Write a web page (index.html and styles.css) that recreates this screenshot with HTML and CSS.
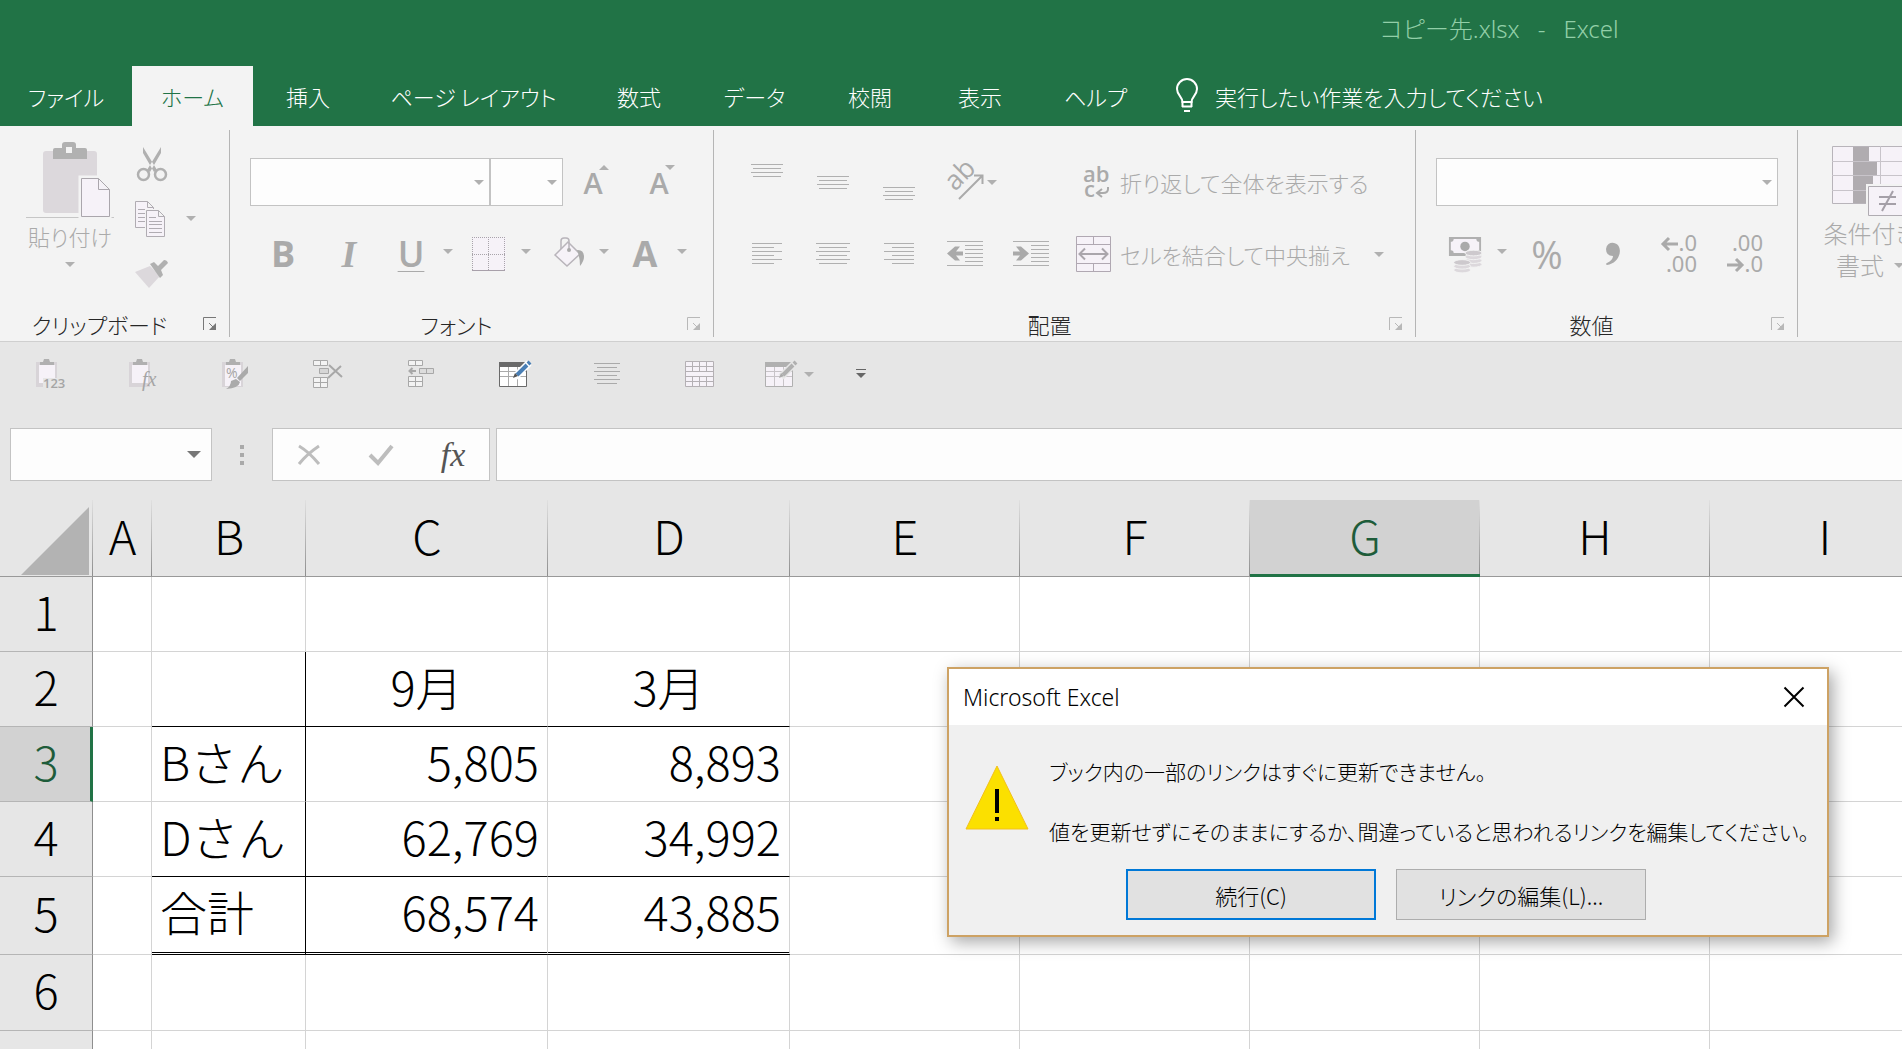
FILE: index.html
```html
<!DOCTYPE html>
<html lang="ja">
<head>
<meta charset="utf-8">
<title>コピー先.xlsx - Excel</title>
<link rel="stylesheet" href="styles.css">
</head>
<body>
<svg class="defs" aria-hidden="true">
  <symbol id="arrow" viewBox="0 0 10 5"><path d="M0 0h10L5 5z" fill="currentColor"/></symbol>
  <symbol id="launch" viewBox="0 0 14 14"><path d="M.5 13V.5H13M6 6l5 5" fill="none" stroke="currentColor"/><path d="M13 6v7H6z" fill="currentColor"/></symbol>
</svg>

<header class="titlebar"><span>コピー先.xlsx</span><span>-</span><span>Excel</span></header>

<nav class="tabs">
  <button class="tab tab-file">ファイル</button>
  <button class="tab tab-m active">ホーム</button>
  <button class="tab">挿入</button>
  <button class="tab tab-l">ページ レイアウト</button>
  <button class="tab">数式</button>
  <button class="tab tab-m">データ</button>
  <button class="tab">校閲</button>
  <button class="tab">表示</button>
  <button class="tab tab-m">ヘルプ</button>
  <button class="tellme">
    <svg width="24" height="34" viewBox="0 0 24 34" fill="none" stroke="#fff" stroke-width="2"><path d="M7.500 23c0-5-5.500-7-5.500-13a9.500 9.500 0 0 1 20 0c0 6-5.500 8-5.500 13z"/><path d="M7 27.500h10M9 32h6"/><path d="M7.500 22v6M16.500 22v6"/></svg>
    実行したい作業を入力してください
  </button>
</nav>

<main>
<section class="ribbon">
  <div class="group g-clip">
    <div class="clip-body">
      <button class="paste">
        <svg width="88" height="77" viewBox="0 0 88 77"><rect x="17" y="10" width="54" height="62" rx="3" fill="#dcd8dc"/><path d="M27 18V9q0-2 2-2h7V4q0-3 3-3h8q3 0 3 3v3h9q2 0 2 2v9z" fill="#b1b1b1"/><rect x="40" y="6" width="6" height="6" fill="#f3f3f3"/><path d="M0 76.500h88" stroke="#c6c6c6"/><path d="M54.500 36.500h19l10 11v28h-29z" fill="#f5f2f7" stroke="#f3f3f3" stroke-width="4"/><path d="M55.500 37.500h17l11 11v27h-28zM72.500 37.500v11h11" fill="#f6f2f8" stroke="#aaa6ac"/></svg>
        <span>貼り付け</span>
        <svg class="arr"><use href="#arrow"/></svg>
      </button>
      <div class="clip-tools">
        <button class="tool" aria-label="切り取り"><svg width="34" height="36" viewBox="-2 0 34 36"><path d="M7 1l14 23-3 2L7 7zM25 1L11 24l3 2L25 7z" fill="#b0b0b0"/><g fill="none" stroke="#b0b0b0" stroke-width="2.500"><circle cx="7.500" cy="28.500" r="5.500"/><circle cx="24.500" cy="28.500" r="5.500"/></g></svg></button>
        <button class="tool" aria-label="コピー"><svg width="34" height="36" viewBox="0 0 34 36" fill="#f6f2f8" stroke="#b0acb2"><path d="M1.500 26.500V.5h12l6 6v20zM13.500.5v6h6"/><path d="M4 8.500h7M4 12.500h7M4 16.500h7M4 20.500h7"/><path d="M12.500 35.500v-26h12l6 6v20zM24.500 9.500v6h6" stroke="#f3f3f3" stroke-width="3"/><path d="M12.500 35.500v-26h12l6 6v20zM24.500 9.500v6h6"/><path d="M15 16.500h7M15 20.500h13M15 23.500h13M15 27.500h13M15 31.500h13"/></svg><svg class="arr"><use href="#arrow"/></svg></button>
        <button class="tool" aria-label="書式のコピー/貼り付け"><svg width="34" height="30" viewBox="0 0 34 30"><path d="M1 13l15-6 10 10-11 12z" fill="#dcd8dc"/><path d="M16 5l4-2 4 4 6-6q3 0 4 3l-7 7 2 5-3 3z" fill="#b0b0b0"/></svg></button>
      </div>
    </div>
    <footer class="foot"><span>クリップボード</span><svg class="launch dark"><use href="#launch"/></svg></footer>
  </div>

  <div class="group g-font">
    <div class="row">
      <div class="combo c-font"><select aria-label="フォント"></select><svg class="arr"><use href="#arrow"/></svg></div>
      <div class="combo c-size"><select aria-label="フォント サイズ"></select><svg class="arr"><use href="#arrow"/></svg></div>
      <button class="ib up" aria-label="拡大"><b>A</b><svg class="arr flip"><use href="#arrow"/></svg></button>
      <button class="ib up" aria-label="縮小"><b>A</b><svg class="arr"><use href="#arrow"/></svg></button>
    </div>
    <div class="row">
      <button class="ib letter">B</button>
      <button class="ib letter italic">I</button>
      <button class="split"><span class="letter under">U</span><svg class="arr"><use href="#arrow"/></svg></button>
      <button class="split" aria-label="罫線"><svg width="34" height="34" viewBox="0 0 34 34"><rect width="34" height="34" fill="#f6f2f8"/><path d="M0 .5h33M0 17.500h33M.5 0v33M16.500 0v33M32.500 0v33" stroke="#a8a4aa" stroke-dasharray="1 1"/><path d="M0 33.500h33" stroke="#a8a0aa"/></svg><svg class="arr"><use href="#arrow"/></svg></button>
      <button class="split" aria-label="塗りつぶしの色"><svg width="34" height="34" viewBox="-3 0 34 34"><path d="M2 18L15 5l12 12-13 12z" fill="#f6f2f8" stroke="#b8b4ba" stroke-width="1.500"/><path d="M8 12V4q0-3 3-3h2q3 0 3 3v8" fill="none" stroke="#b8b4ba" stroke-width="1.500"/><circle cx="16" cy="13" r="2" fill="#aaa"/><path d="M25 13q6 0 6 7 0 4-4 9 0-9-3-16z" fill="#aaa"/></svg><svg class="arr"><use href="#arrow"/></svg></button>
      <button class="split"><span class="letter">A</span><svg class="arr"><use href="#arrow"/></svg></button>
    </div>
    <footer class="foot"><span>フォント</span><svg class="launch"><use href="#launch"/></svg></footer>
  </div>

  <div class="group g-align">
    <div class="row">
      <button class="ib" aria-label="上揃え"><svg width="34" height="36" stroke="#b0b0b0"><path d="M1 .5h32M3 4.500h28M1 8.500h32M3 12.500h28"/></svg></button>
      <button class="ib" aria-label="上下中央揃え"><svg width="34" height="36" stroke="#b0b0b0"><path d="M1 12.500h32M3 16.500h28M1 20.500h32M3 24.500h28"/></svg></button>
      <button class="ib" aria-label="下揃え"><svg width="34" height="36" stroke="#b0b0b0"><path d="M1 23.500h32M3 27.500h28M1 31.500h32M3 35.500h28"/></svg></button>
      <button class="ib orient" aria-label="方向"><svg width="36" height="36" viewBox="0 0 36 36"><text class="ab" transform="translate(8 28) rotate(-45)">ab</text><path d="M12 35l23-23M27 11.500h8.500V20" fill="none" stroke="#aaa" stroke-width="2"/></svg><svg class="arr"><use href="#arrow"/></svg></button>
      <button class="wide wrap"><svg width="30" height="38" viewBox="0 0 30 38"><text class="abb" x="1" y="19">ab</text><text class="abb" x="2" y="34">c</text><path d="M26 24v2q0 4-5 4h-5M20 26l-5 4 5 4" fill="none" stroke="#aaa" stroke-width="2"/></svg><span>折り返して全体を表示する</span></button>
    </div>
    <div class="row">
      <button class="ib" aria-label="左揃え"><svg width="34" height="22" stroke="#b0b0b0"><path d="M2 .5h30M2 4.500h22M2 8.500h30M2 12.500h22M2 16.500h30M2 20.500h22"/></svg></button>
      <button class="ib" aria-label="中央揃え"><svg width="34" height="22" stroke="#b0b0b0"><path d="M0 .5h34M3 4.500h28M0 8.500h34M3 12.500h28M0 16.500h34M3 20.500h28"/></svg></button>
      <button class="ib" aria-label="右揃え"><svg width="34" height="22" stroke="#b0b0b0"><path d="M2 .5h30M10 4.500h22M2 8.500h30M10 12.500h22M2 16.500h30M10 20.500h22"/></svg></button>
      <button class="ib" aria-label="インデントを減らす"><svg width="36" height="26" viewBox="0 0 36 26"><path d="M0 .5h36M18 4.500h18M18 8.500h18M18 12.500h18M18 16.500h18M18 20.500h18M0 24.500h36" stroke="#b0b0b0"/><path d="M0 12.500l8-7h5l-4 5h7v4H9l4 5H8z" fill="#aaa"/></svg></button>
      <button class="ib" aria-label="インデントを増やす"><svg width="36" height="26" viewBox="0 0 36 26"><path d="M0 .5h36M18 4.500h18M18 8.500h18M18 12.500h18M18 16.500h18M18 20.500h18M0 24.500h36" stroke="#b0b0b0"/><path d="M16 12.500l-8-7H3l4 5H0v4h7l-4 5h5z" fill="#aaa"/></svg></button>
      <button class="wide merge"><svg width="36" height="36" viewBox="0 0 36 36" fill="none"><path d="M.5.5h34v35H.5zM.5 8.500h34M.5 27.500h34M17.500.5v8M17.500 27.500v8" fill="#f6f2f8" stroke="#b0a8b2"/><path d="M3 18h29M9 12.500L3.500 18 9 23.500M26 12.500l5.500 5.500-5.500 5.500" stroke="#aaa6ac" stroke-width="2"/></svg><span>セルを結合して中央揃え</span><svg class="arr"><use href="#arrow"/></svg></button>
    </div>
    <footer class="foot"><span>配置</span><svg class="launch"><use href="#launch"/></svg></footer>
  </div>

  <div class="group g-num">
    <div class="row">
      <div class="combo c-num"><select aria-label="数値の書式"></select><svg class="arr"><use href="#arrow"/></svg></div>
    </div>
    <div class="row">
      <button class="split" aria-label="通貨表示形式"><svg width="36" height="40" viewBox="0 0 36 40"><path d="M1 2h34v20H1z" fill="#b0b0b0"/><path d="M6 4h24q0 3 3 3v9q-3 0-3 3H6q0-3-3-3V7q3 0 3-3z" fill="#f6f2f8"/><circle cx="18" cy="12" r="5" fill="#aaa"/><g fill="#dcd8dc" stroke="#f3f3f3" stroke-width="1"><ellipse cx="27" cy="31" rx="9" ry="3"/><ellipse cx="27" cy="27" rx="9" ry="3"/><ellipse cx="27" cy="23" rx="9" ry="3"/><ellipse cx="27" cy="19" rx="9" ry="3" fill="#cdc9cd"/><ellipse cx="15" cy="37" rx="9" ry="3"/><ellipse cx="15" cy="33" rx="9" ry="3"/><ellipse cx="15" cy="29" rx="9" ry="3" fill="#cdc9cd"/></g></svg><svg class="arr"><use href="#arrow"/></svg></button>
      <button class="ib percent">%</button>
      <button class="ib" aria-label="桁区切りスタイル"><svg width="18" height="24" viewBox="0 0 18 24"><path d="M2 7a6.500 6.500 0 0 1 8-6c10 2 7 20-7 22q-2-1 0-2 6-3 6-7-7 0-7-7z" fill="#aaa"/></svg></button>
      <button class="ib" aria-label="小数点以下の表示桁数を増やす"><svg width="36" height="40" viewBox="0 0 36 40"><text class="dec" x="36" y="17" text-anchor="end">.0</text><text class="dec" x="36" y="38" text-anchor="end">.00</text><path d="M2 10h15M8 4l-6 6 6 6" fill="none" stroke="#aaa" stroke-width="3"/></svg></button>
      <button class="ib" aria-label="小数点以下の表示桁数を減らす"><svg width="36" height="40" viewBox="0 0 36 40"><text class="dec" x="36" y="17" text-anchor="end">.00</text><text class="dec" x="36" y="38" text-anchor="end">.0</text><path d="M0 31h15M9 25l6 6-6 6" fill="none" stroke="#aaa" stroke-width="3"/></svg></button>
    </div>
    <footer class="foot"><span>数値</span><svg class="launch"><use href="#launch"/></svg></footer>
  </div>

  <div class="group g-style">
    <button class="cond">
      <svg width="96" height="72" viewBox="0 0 96 72"><path d="M10.500 1.500h74v57h-74z" fill="#f6f2f8" stroke="#b8b4ba"/><path d="M10 16.500h75M10 30.500h75M10 45.500h75M58.500 1v58" stroke="#c8c4ca"/><path d="M31 2h16v14h8v14h-4v15h4v13H31z" fill="#b0acb0"/><path d="M31 16.500h24M31 30.500h24M31 45.500h20" stroke="#c8c4ca"/><path d="M45.500 40.500h38v30h-38z" fill="#f6f2f8" stroke="#f3f3f3" stroke-width="3"/><path d="M46.500 41.500h36v29h-36z" fill="#f6f2f8" stroke="#b0acb2"/><path d="M57 52h17M57 59h17M71 46L60 66" stroke="#a5a0a8" stroke-width="2"/></svg>
      <span>条件付き</span>
      <span>書式 <svg class="arr"><use href="#arrow"/></svg></span>
    </button>
  </div>
</section>

<section class="qat">
  <button aria-label="値の貼り付け"><svg width="28" height="32" viewBox="0 0 28 32"><path d="M1 4h21v25H1z" fill="#d8d4d8"/><path d="M4 7h16v18H4z" fill="#f6f2f8"/><path d="M5 7V4h3l1-3h5l1 3h4v3z" fill="#b0b0b0"/><path d="M8 20h20v11H8z" fill="#e6e6e6"/><text class="m num" x="8" y="30">123</text></svg></button>
  <button aria-label="数式の貼り付け"><svg width="28" height="32" viewBox="0 0 28 32"><path d="M1 4h21v25H1z" fill="#d8d4d8"/><path d="M4 7h16v18H4z" fill="#f6f2f8"/><path d="M5 7V4h3l1-3h5l1 3h4v3z" fill="#b0b0b0"/><text class="m fn" x="14" y="28">fx</text></svg></button>
  <button aria-label="書式の貼り付け"><svg width="28" height="32" viewBox="0 0 28 32"><path d="M1 4h21v25H1z" fill="#d8d4d8"/><path d="M4 7h16v21H4z" fill="#f6f2f8"/><path d="M5 7V4h3l1-3h5l1 3h4v3z" fill="#b0b0b0"/><text class="m pc" x="5" y="20">%</text><path d="M27 8v7l-8 8-3-3zM15 21l4 3q-1 6-14 7 5-3 5-8z" fill="#aaa"/></svg></button>
  <button aria-label="セルの削除"><svg width="32" height="30" viewBox="0 0 32 30" fill="#f3f3f3" stroke="#a8a8a8"><path d="M1.500 1.500h14v5h-14zM8.500 1.500v5M1.500 18.500h14v10h-14zM8.500 18.500v10M1.500 23.500h14"/><path d="M7.500 9.500h9v5h-9z" fill="#d6d6d6"/><path d="M17 6l13 12M29 7L16 19" stroke-width="2"/></svg></button>
  <button aria-label="セルの挿入"><svg width="32" height="30" viewBox="0 0 32 30" fill="#f3f3f3" stroke="#a8a8a8"><path d="M3.500 1.500h14v5h-14zM10.500 1.500v5M3.500 17.500h14v10h-14zM10.500 17.500v10M3.500 22.500h14"/><path d="M14.500 9.500h14v5h-14zM21.500 9.500v5" fill="#dcdcdc"/><path d="M4 12h7M7.500 9L4.500 12l3 3" fill="none" stroke-width="2"/></svg></button>
  <button aria-label="罫線の作成"><svg width="34" height="34" viewBox="0 0 34 34"><path d="M2.500 6.500h27v23h-27z" fill="#fff" stroke="#6a6a6a"/><path d="M2 5h28v5H2z" fill="#6a6a6a"/><path d="M3 14.500h26M3 19.500h26M11.500 10v19M20.500 10v19" stroke="#aaa"/><path d="M18 20L32 6" stroke="#fff" stroke-width="7"/><path d="M20 18L30 8M31 7l2-2" stroke="#4a7fb5" stroke-width="4"/><path d="M16 21l2-5 3 3z" fill="#555"/></svg></button>
  <button aria-label="中央揃え"><svg width="26" height="24" stroke="#aaa"><path d="M0 1.500h26M3 5.500h20M0 9.500h26M3 13.500h20M0 17.500h26M3 21.500h20"/></svg></button>
  <button aria-label="セルの結合"><svg width="30" height="28" viewBox="0 0 30 28"><path d="M.5 1.500h28v25H.5zM.5 6.500h28M.5 11.500h28M.5 16.500h28M.5 21.500h28M7.500 1v10M14.500 1v10M21.500 1v10M7.500 16v10M14.500 16v10M21.500 16v10" fill="#f6f2f8" stroke="#b4b0b4"/></svg></button>
  <button class="q-split" aria-label="罫線"><svg width="34" height="34" viewBox="0 0 34 34"><path d="M2.500 6.500h27v23h-27z" fill="#f6f2f8" stroke="#b0b0b0"/><path d="M2 5h28v5H2z" fill="#b0b0b0"/><path d="M3 14.500h26M3 19.500h26M11.500 10v19M20.500 10v19" stroke="#c8c4c8"/><path d="M18 20L32 6" stroke="#e6e6e6" stroke-width="7"/><path d="M20 18L30 8M31 7l2-2" stroke="#b0b0b0" stroke-width="4"/><path d="M16 21l2-5 3 3z" fill="#aaa"/></svg><svg class="arr"><use href="#arrow"/></svg></button>
  <button class="q-more" aria-label="カスタマイズ"><svg width="10" height="10" viewBox="0 0 10 10"><path d="M0 .5h10" stroke="#666"/><path d="M0 4h10L5 9z" fill="#666"/></svg></button>
</section>

<section class="formula">
  <div class="combo namebox"><input type="text" aria-label="名前ボックス"><svg class="arr big"><use href="#arrow"/></svg></div>
  <span class="dots"><i></i><i></i><i></i></span>
  <div class="fbtns">
    <button aria-label="キャンセル"><svg width="24" height="22" viewBox="0 0 24 22" stroke="#bdbdbd" fill="none"><path d="M2 2q10 6 20 18" stroke-width="3"/><path d="M2 20Q10 10 22 2" stroke-width="3"/></svg></button>
    <button aria-label="入力"><svg width="26" height="22" viewBox="0 0 26 22" stroke="#bdbdbd" fill="none" stroke-width="4"><path d="M2 11l8 8L24 2"/></svg></button>
    <button class="fx">fx</button>
  </div>
  <input class="finput" type="text" aria-label="数式バー">
</section>

<div class="sheet">
<table>
  <colgroup><col class="w-h"><col class="w-a"><col class="w-b"><col class="w-c"><col class="w-c"><col class="w-e"><col class="w-e"><col class="w-e"><col class="w-e"><col class="w-e"></colgroup>
  <thead><tr><th class="corner"><svg width="68" height="68"><path d="M68 0v68H0z" fill="#b3b3b3"/></svg></th><th>A</th><th>B</th><th>C</th><th>D</th><th>E</th><th>F</th><th class="sel">G</th><th>H</th><th>I</th></tr></thead>
  <tbody>
    <tr><th>1</th><td></td><td></td><td></td><td></td><td></td><td></td><td></td><td></td><td></td></tr>
    <tr class="line"><th>2</th><td></td><td class="k"></td><td class="k c">9月</td><td class="k c">3月</td><td></td><td></td><td></td><td></td><td></td></tr>
    <tr><th class="sel">3</th><td></td><td class="k">Bさん</td><td class="n">5,805</td><td class="n">8,893</td><td></td><td></td><td></td><td></td><td></td></tr>
    <tr class="line"><th>4</th><td></td><td class="k">Dさん</td><td class="k n">62,769</td><td class="k n">34,992</td><td></td><td></td><td></td><td></td><td></td></tr>
    <tr class="total"><th>5</th><td></td><td class="k">合計</td><td class="k n">68,574</td><td class="k n">43,885</td><td></td><td></td><td></td><td></td><td></td></tr>
    <tr class="tall"><th>6</th><td></td><td></td><td></td><td></td><td></td><td></td><td></td><td></td><td></td></tr>
    <tr><th></th><td></td><td></td><td></td><td></td><td></td><td></td><td></td><td></td><td></td></tr>
  </tbody>
</table>
</div>
</main>

<div class="dialog" role="dialog" aria-labelledby="dlg">
  <div class="dlg-head"><span id="dlg">Microsoft Excel</span><button aria-label="閉じる"><svg width="20" height="20" stroke="#000" stroke-width="2"><path d="M.5.5l19 19M19.500.5l-19 19"/></svg></button></div>
  <div class="dlg-body">
    <svg width="66" height="66" viewBox="0 0 66 66"><path d="M33 1l31 63H2z" fill="#fbe000" stroke="#f2c01c"/><path d="M31 24h4v24h-4zM31 52h4v4h-4z"/></svg>
    <div><p>ブック内の一部のリンクはすぐに更新できません。</p><p>値を更新せずにそのままにするか、間違っていると思われるリンクを編集してください。</p></div>
  </div>
  <div class="dlg-foot"><button class="primary">続行(C)</button><button>リンクの編集(L)...</button></div>
</div>
</body>
</html>
```
FILE: styles.css
```css
* { box-sizing: border-box; }
html, body { height: 100%; }
body {
  margin: 0;
  overflow: hidden;
  background: #e6e6e6;
  font: 300 22px/32px "Noto Sans CJK JP", sans-serif;
  font-feature-settings: "palt";
  display: flex;
  flex-direction: column;
  position: relative;
}
button { border: 0; padding: 0; margin: 0; background: none; font: inherit; font-feature-settings: inherit; color: inherit; white-space: nowrap; }
svg { display: block; flex: none; overflow: visible; }
p { margin: 0; }
.defs { position: absolute; width: 0; height: 0; }
.arr { width: 10px; height: 5px; color: #b0b0b0; }
.flip { transform: rotate(180deg); }

/* title and tabs */
.titlebar { height: 66px; padding: 13px 0 0 1380px; background: #217346; color: #92cfa8; display: flex; gap: 18px; white-space: nowrap; font-size: 24px; font-family: "Noto Sans", "Noto Sans CJK JP", sans-serif; }
.tabs { height: 60px; background: #217346; color: #fff; display: flex; }
.tab { width: 110px; }
.tab-m { width: 121px; }
.tab-file { width: 132px; }
.tab-l { width: 221px; }
.tab.active { background: #f3f3f3; color: #217346; }
.tellme { display: flex; align-items: center; gap: 16px; padding-left: 19px; }

/* ribbon */
main { flex: 1; min-height: 0; display: flex; flex-direction: column; }
.ribbon { height: 216px; flex: none; background: #f3f3f3; border-bottom: 1px solid #cfcfcf; padding: 4px 0; display: flex; overflow: hidden; color: #aaa; }
.group { border-right: 1px solid #b5b5b5; flex: none; display: flex; flex-direction: column; }
.g-clip { width: 230px; }
.g-font { width: 484px; padding: 28px 0 0 20px; }
.g-align { width: 702px; padding: 28px 0 0 20px; }
.g-num { width: 382px; padding: 28px 0 0 20px; }
.g-style { border: 0; }
.row { display: flex; height: 48px; margin-bottom: 24px; }
.foot { margin-top: auto; height: 26px; display: flex; align-items: center; color: #262626; }
.foot span { flex: 1; text-align: center; }
.g-font .foot, .g-align .foot, .g-num .foot { margin-left: -20px; }
.launch { width: 14px; height: 14px; margin: 0 12px 0 4px; color: #b8b8b8; }
.launch.dark { color: #777; }
.clip-body { display: flex; padding: 6px 0 0 26px; }
.paste { width: 88px; display: flex; flex-direction: column; align-items: center; align-self: flex-start; padding-top: 5px; }
.paste span { height: 44px; line-height: 36px; }
.clip-tools { display: grid; grid-template-rows: repeat(3, 55px); margin-left: 20px; }
.tool { display: flex; align-items: center; gap: 18px; }

.combo { background: #fdfdfd; border: 1px solid #c3c3c3; display: flex; align-items: center; padding-right: 5px; }
.combo select, .combo input { flex: 1; min-width: 0; width: 0; height: 100%; border: 0; background: none; appearance: none; font: inherit; outline: 0; }
.c-font { width: 240px; }
.c-size { width: 73px; }
.c-num { width: 342px; }
.ib { width: 66px; display: flex; align-items: center; justify-content: center; }
.up { align-items: flex-start; font: 600 29px/42px "Open Sans", sans-serif; padding-top: 4px; }
.up b { font-weight: 600; }
.up .arr { margin: 3px 0 0 -4px; }
.letter { font: 700 36px/48px "Open Sans", sans-serif; }
.italic { font: italic 700 38px/48px "Liberation Serif", serif; }
.split { width: 78px; display: flex; align-items: center; padding-left: 12px; }
.split > :first-child { width: 34px; text-align: center; }
.split .arr { margin: 0 0 6px 15px; }
.under { text-decoration: underline; text-decoration-thickness: 1px; text-underline-offset: 4px; font-weight: 600; }
.orient { justify-content: flex-start; padding-left: 15px; gap: 4px; }
.ab { font: 400 27px "Open Sans", sans-serif; fill: #aaa; }
.abb { font: 600 22px "Open Sans", sans-serif; fill: #aaa; }
.dec { font: 400 22px "Noto Sans", sans-serif; fill: #aaa; }
.wide { display: flex; align-items: center; gap: 8px; padding-left: 12px; }
.wrap { margin-left: 66px; padding-left: 18px; }
.merge .arr { margin-left: 16px; }
.percent { font: 400 38px/48px "Open Sans", sans-serif; }
.cond { margin: 15px 0 0 24px; width: 96px; display: flex; flex-direction: column; text-align: left; font-size: 24px; }
.cond span { display: flex; align-items: center; justify-content: center; gap: 10px; }

/* quick access toolbar */
.qat { height: 62px; flex: none; display: flex; padding: 2px 0 0 2px; }
.qat button { width: 93px; display: flex; align-items: center; justify-content: center; }
.qat .q-split { justify-content: flex-start; padding-left: 17px; gap: 7px; width: 86px; }
.qat .q-more { width: 58px; }
.m { fill: #a5a5a5; }
.m.num { font: 600 13px "Open Sans", sans-serif; }
.m.fn { font: italic 20px "Liberation Serif", serif; }
.m.pc { font: 14px "Open Sans", sans-serif; }

/* formula bar */
.formula { height: 96px; flex: none; display: flex; padding: 24px 0 19px 10px; }
.namebox { width: 202px; padding-right: 10px; }
.arr.big { width: 14px; height: 7px; color: #777; }
.dots { width: 60px; display: flex; flex-direction: column; align-items: center; justify-content: center; gap: 4px; }
.dots i { width: 4px; height: 4px; background: #aaa; }
.fbtns { width: 218px; background: #fdfdfd; border: 1px solid #c3c3c3; display: grid; grid-template-columns: repeat(3, 72px); place-items: center; }
.fx { font: italic 400 34px/40px "Liberation Serif", serif; color: #555; }
.finput { flex: 1; min-width: 0; margin-left: 6px; border: 1px solid #c3c3c3; border-right: 0; background: #fdfdfd; }

/* sheet */
.sheet { flex: 1; min-height: 0; overflow: hidden; }
table { table-layout: fixed; width: 1940px; border-collapse: separate; border-spacing: 0; font-size: 47px; line-height: 60px; color: #000; font-feature-settings: normal; }
.w-h { width: 93px; }
.w-a { width: 59px; }
.w-b { width: 154px; }
.w-c { width: 242px; }
.w-e { width: 230px; }
th, td { padding: 0 0 7px; height: 75px; white-space: nowrap; font-weight: 300; }
thead th { height: 77px; border-bottom: 1px solid #999; background: linear-gradient(#e0e0e0, #8e8e8e) right / 1px 100% no-repeat #e6e6e6; }
thead .sel { background-color: #d2d2d2; border-bottom: 3px solid #217346; color: #1e5c3a; padding-bottom: 5px; }
.corner { padding: 0; }
.corner svg { margin: 5px 0 0 21px; }
tbody th { background: #e6e6e6; border-right: 1px solid #8e8e8e; border-bottom: 1px solid #b5b5b5; }
tbody .sel { background: #d2d2d2; border-right: 3px solid #217346; color: #1e5c3a; padding-left: 2px; }
td { background: #fff; border-right: 1px solid #d4d4d4; border-bottom: 1px solid #d4d4d4; padding: 0 8px 7px; }
.line .k { border-bottom-color: #000; }
.line td:nth-child(3), .total td:nth-child(3), td.k:nth-child(3) { border-right-color: #000; }
.total td, .total th { height: 78px; }
.total .k { border-bottom: 3px double #000; }
.tall td, .tall th { height: 76px; }
.c { text-align: center; }
.n { text-align: right; }

/* message box */
.dialog { position: absolute; top: 667px; right: 73px; width: 882px; border: 2px solid #cda264; background: #f0f0f0; box-shadow: 4px 5px 16px rgba(0, 0, 0, .35); }
.dlg-head { height: 56px; background: #fff; display: flex; align-items: center; justify-content: space-between; padding: 0 23px 0 14px; }
.dlg-head span { font-family: "Noto Sans", sans-serif; font-size: 23px; }
.dlg-body { display: flex; gap: 19px; padding: 30px 0 0 15px; font-size: 21px; }
.dlg-body svg { margin-top: 10px; }
.dlg-body p { margin-bottom: 28px; white-space: nowrap; }
.dlg-foot { display: flex; gap: 20px; margin: -6px 0 15px 177px; }
.dlg-foot button { width: 250px; height: 51px; background: #e1e1e1; border: 1px solid #adadad; }
.dlg-foot .primary { border: 2px solid #0078d7; }
```
